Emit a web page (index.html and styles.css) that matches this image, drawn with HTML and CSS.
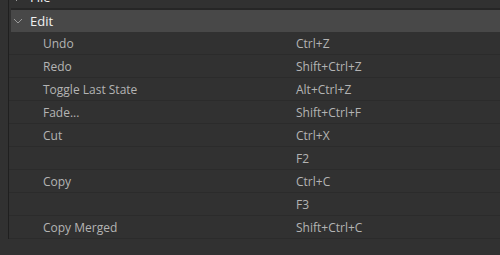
FILE: index.html
```html
<!DOCTYPE html>
<html lang="en">
<head>
    <meta charset="UTF-8">
    <meta name="viewport" content="width=device-width, initial-scale=1.0">
    <title>Keyboard Shortcuts</title>
    <link rel="stylesheet" href="styles.css">
</head>
<body>
    <div class="panel">
        <div class="group-head collapsed">
            <svg class="chevron" width="10" height="10" viewBox="0 0 10 10"><path d="M3 1 L7 5 L3 9" fill="none" stroke="#9a9a9a" stroke-width="1"/></svg>
            <span>File</span>
        </div>

        <div class="group-head open">
            <svg class="chevron" width="10" height="10" viewBox="0 0 10 10"><path d="M1 3 L5 7 L9 3" fill="none" stroke="#9a9a9a" stroke-width="1"/></svg>
            <span>Edit</span>
        </div>

        <div class="row"><span class="cmd">Undo</span><span class="keys">Ctrl+Z</span></div>
        <div class="row"><span class="cmd">Redo</span><span class="keys">Shift+Ctrl+Z</span></div>
        <div class="row"><span class="cmd">Toggle Last State</span><span class="keys">Alt+Ctrl+Z</span></div>
        <div class="row"><span class="cmd">Fade...</span><span class="keys">Shift+Ctrl+F</span></div>
        <div class="row"><span class="cmd">Cut</span><span class="keys">Ctrl+X</span></div>
        <div class="row"><span class="cmd"></span><span class="keys">F2</span></div>
        <div class="row"><span class="cmd">Copy</span><span class="keys">Ctrl+C</span></div>
        <div class="row"><span class="cmd"></span><span class="keys">F3</span></div>
        <div class="row"><span class="cmd">Copy Merged</span><span class="keys">Shift+Ctrl+C</span></div>
    </div>
</body>
</html>
```

FILE: styles.css
```css
body {
    margin: 0;
    background-color: #313131;
    font-family: "Open Sans", Arial, sans-serif;
    overflow: hidden;
}

.panel {
    margin: -14px 0 0 8px;
    border-left: 1px solid #1f1f1f;
    padding-left: 2px;
}

.group-head {
    display: flex;
    align-items: center;
    height: 22px;
    padding-left: 2px;
    gap: 7px;
    font-size: 13px;
    color: #f0f0f0;
}

.group-head.collapsed {
    border-bottom: 2px solid #262626;
}

.group-head.open {
    background-color: #484848;
}

.chevron {
    flex: none;
}

.row {
    display: grid;
    grid-template-columns: 253px 1fr;
    align-items: center;
    height: 22px;
    margin-left: -2px;
    padding-left: 34px;
    border-bottom: 1px solid #2b2b2b;
    font-size: 12px;
    color: #b4b4b4;
}
```
